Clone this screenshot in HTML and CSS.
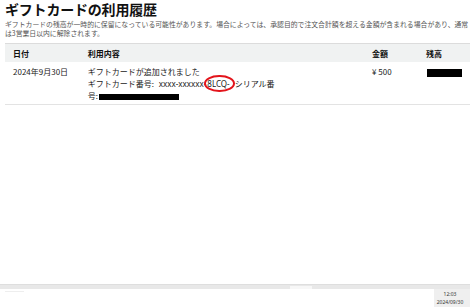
FILE: index.html
```html
<!DOCTYPE html>
<html lang="ja">
<head>
    <meta charset="UTF-8">
    <meta name="viewport" content="width=device-width, initial-scale=1.0">
    <title>ギフトカードの利用履歴</title>
    <link rel="stylesheet" href="styles.css">
</head>
<body>
    <div class="page">
        <h1 class="title">ギフトカードの利用履歴</h1>
        <p class="note">ギフトカードの残高が一時的に保留になっている可能性があります。場合によっては、承認目的で注文合計額を超える金額が含まれる場合があり、通常<br>は3営業日以内に解除されます。</p>

        <table class="history">
            <thead>
                <tr>
                    <th class="col-date">日付</th>
                    <th class="col-detail">利用内容</th>
                    <th class="col-amount">金額</th>
                    <th class="col-balance">残高</th>
                </tr>
            </thead>
            <tbody>
                <tr>
                    <td>2024年9月30日</td>
                    <td>
                        ギフトカードが追加されました<br>
                        ギフトカード番号: <span class="code">xxxx-xxxxxx-</span><span class="circled">8LCQ-</span>シリアル番<br>
                        号:<span class="redact redact-serial"></span>
                    </td>
                    <td>¥ 500</td>
                    <td><span class="redact redact-balance"></span></td>
                </tr>
            </tbody>
        </table>
    </div>

    <div class="bottom">
        <div class="scrollbar"><span class="thumb"></span></div>
        <div class="taskbar">
            <span class="tab"></span>
            <div class="clock">
                <span>12:03</span>
                <span>2024/09/30</span>
            </div>
        </div>
    </div>
</body>
</html>
```

FILE: styles.css
```css
html, body {
    height: 100%;
}
body {
    margin: 0;
    font-family: "Noto Sans CJK JP", "Noto Sans", sans-serif;
    color: #111;
    background: #fff;
    display: flex;
    flex-direction: column;
}
.page {
    padding-left: 5px;
}
.title {
    margin: 0;
    font-size: 14px;
    line-height: 18px;
    font-weight: bold;
    letter-spacing: -0.2px;
}
.note {
    margin: 2px 0 5px;
    font-size: 6.85px;
    line-height: 9px;
    color: #555;
    white-space: nowrap;
}
.history {
    width: 465px;
    border-collapse: collapse;
    font-size: 8px;
    line-height: 12px;
    border-bottom: 1px solid #e3e3e3;
}
.history th {
    text-align: left;
    font-weight: bold;
    background: #f0f2f2;
    border-top: 1px solid #dcdcdc;
    padding: 4px 8px 3px;
    line-height: 11px;
}
.history td {
    vertical-align: top;
    padding: 4px 8px 2px;
    color: #222;
}
.col-date { width: 59px; }
.col-detail { width: 269px; }
.col-amount { width: 38px; }
.code {
    font-family: "Noto Sans", sans-serif;
    font-size: 8px;
    margin-left: 3px;
}
.circled {
    position: relative;
    font-family: "Noto Sans", sans-serif;
    margin-left: 1px;
    margin-right: 5px;
}
.circled::after {
    content: "";
    position: absolute;
    left: -3px;
    right: -5px;
    top: -3px;
    bottom: -3px;
    border: 2px solid #e3141b;
    border-radius: 50%;
}
.redact {
    display: inline-block;
    background: #000;
    vertical-align: middle;
}
.redact-serial {
    width: 80px;
    height: 6px;
    margin-left: 1px;
}
.redact-balance {
    width: 35px;
    height: 8px;
    margin-left: 1px;
}
.bottom {
    margin-top: auto;
}
.scrollbar {
    height: 4px;
    background: #e8e8e8;
    border-top: 1px solid #dedede;
    position: relative;
}
.thumb {
    position: absolute;
    left: 290px;
    top: 1px;
    width: 22px;
    height: 3px;
    background: #f7f7f7;
}
.taskbar {
    height: 18px;
    display: flex;
    justify-content: space-between;
    align-items: flex-start;
}
.tab {
    width: 19px;
    height: 2px;
    margin-left: 5px;
    background: #fff;
    border-bottom: 1px solid #eee;
}
.clock {
    width: 36px;
    height: 18px;
    background: #efefef;
    display: flex;
    flex-direction: column;
    align-items: center;
    justify-content: center;
    font-family: "Noto Sans", sans-serif;
    font-size: 5px;
    line-height: 8px;
    color: #333;
    padding-right: 4px;
    box-sizing: border-box;
}
```
